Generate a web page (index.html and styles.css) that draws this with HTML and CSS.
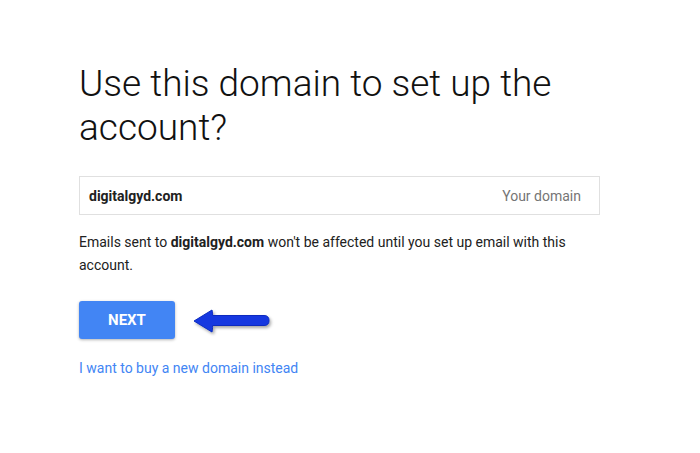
FILE: index.html
```html
<!DOCTYPE html>
<html>
<head>
<meta charset="utf-8">
<link rel="stylesheet" href="styles.css">
</head>
<body>
<main class="page">
  <h1 class="title">Use this domain to set up the account?</h1>
  <div class="domain-box">
    <span class="domain-name">digitalgyd.com</span>
    <span class="domain-label">Your domain</span>
  </div>
  <p class="note">Emails sent to <b>digitalgyd.com</b> won't be affected until you set up email with this account.</p>
  <div class="actions">
    <button class="next-btn">NEXT</button>
    <svg class="arrow" width="84" height="32" viewBox="0 0 84 32">
      <defs>
        <filter id="sh" x="-20%" y="-40%" width="140%" height="180%">
          <feDropShadow dx="1.5" dy="2" stdDeviation="1.5" flood-color="#000" flood-opacity="0.35"/>
        </filter>
      </defs>
      <path d="M1 16 L19 5 Q20 10 19.5 10.5 L71 10.5 Q76 10.5 76 15.5 Q76 20.5 71 20.5 L19.5 20.5 Q20 21 19 27 Z" fill="#1538e0" stroke="#0a2cc0" stroke-width="1" stroke-linejoin="round" filter="url(#sh)"/>
    </svg>
  </div>
  <a class="link" href="#">I want to buy a new domain instead</a>
</main>
</body>
</html>
```
FILE: styles.css
```css
html, body {
  margin: 0;
  background: #fff;
}
.page {
  padding: 62px 0 0 79px;
  width: 521px;
  font-family: Roboto, "Liberation Sans", sans-serif;
  color: #212121;
}
.title {
  margin: 0;
  font-size: 37px;
  font-weight: 300;
  line-height: 44px;
  color: #111;
  letter-spacing: 0;
}
.domain-box {
  margin-top: 26px;
  height: 37px;
  border: 1px solid #e0e0e0;
  display: flex;
  align-items: center;
  justify-content: space-between;
  padding: 0 18px 0 9px;
  font-size: 14px;
}
.domain-name {
  font-weight: 700;
  color: #212121;
}
.domain-label {
  color: #757575;
}
.note {
  margin: 16px 0 0;
  font-size: 14px;
  line-height: 23px;
  color: #212121;
}
.actions {
  margin-top: 24px;
  display: flex;
  align-items: center;
  gap: 18px;
}
.next-btn {
  width: 96px;
  height: 38px;
  border: 0;
  border-radius: 3px;
  background: #4285f4;
  color: #fff;
  font-family: Roboto, "Liberation Sans", sans-serif;
  font-size: 15px;
  font-weight: 700;
  box-shadow: 0 1px 3px rgba(0,0,0,0.3);
}
.arrow {
  display: block;
  margin-top: 2px;
}
.link {
  display: inline-block;
  margin-top: 21px;
  font-size: 14px;
  color: #4285f4;
  text-decoration: none;
}
```
